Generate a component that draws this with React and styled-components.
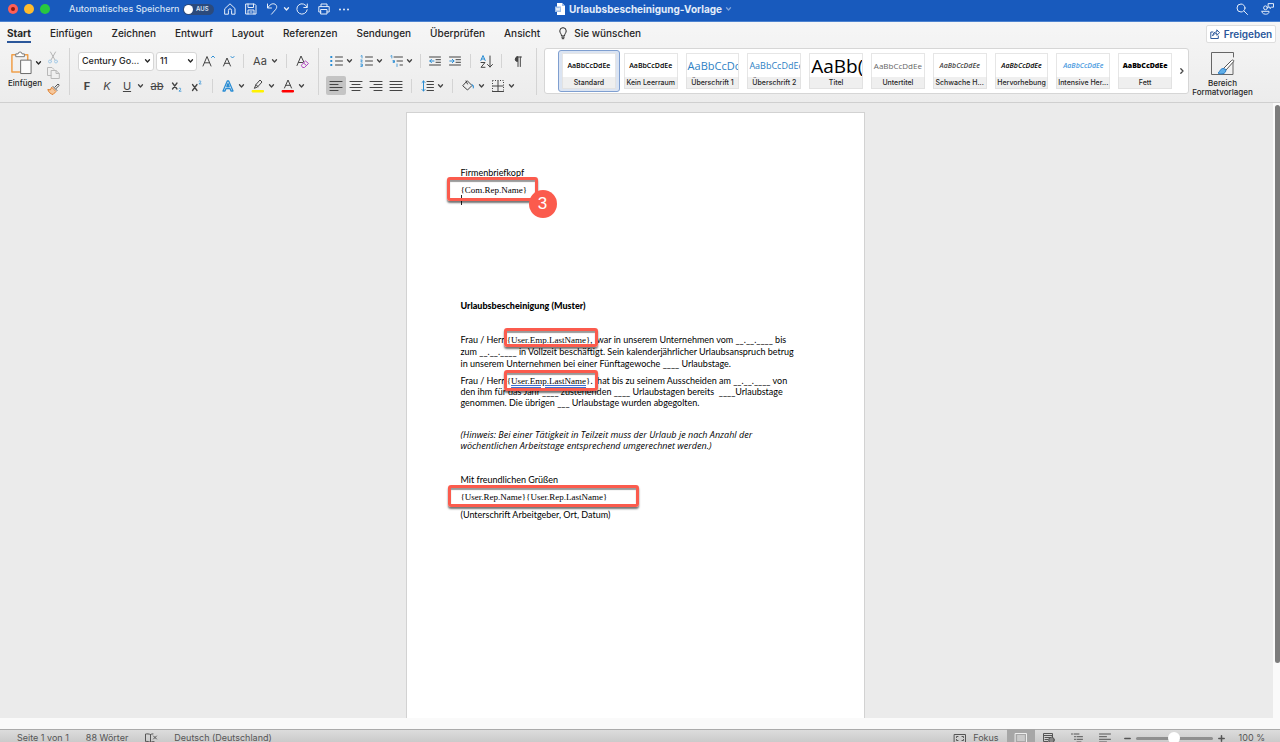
import React from "react";
import styled, { createGlobalStyle, css } from "styled-components";

const Global = createGlobalStyle`
  * { box-sizing: border-box; }
  body { margin: 0; font-family: Inter, "Liberation Sans", sans-serif; color: #262626; }
  button, select, input { font: inherit; color: inherit; margin: 0; padding: 0; border: 0; background: none; }
  a { color: inherit; text-decoration: none; }
  svg { display: block; flex: none; overflow: visible; }
`;

const Shell = styled.div`
  display: flex;
  flex-direction: column;
  height: 100vh;
  overflow: hidden;
`;

/* ---------- title bar ---------- */
const TitleBar = styled.header`
  display: grid;
  grid-template-columns: 1fr auto 1fr;
  align-items: center;
  flex: none;
  height: 22px;
  padding: 0 2px 3px 8px;
  background: #185abd;
  border-bottom: 1px solid #4d83d0;
  color: #fff;
`;
const TitleGroup = styled.div`
  display: flex;
  align-items: center;
  justify-content: ${(p) => (p.$end ? "flex-end" : "flex-start")};
  gap: ${(p) => p.$gap || 0}px;
`;
const Light = styled.button`
  display: grid;
  place-items: center;
  width: 10px;
  height: 10px;
  border-radius: 50%;
  background: ${(p) => p.$color};
  &::after {
    content: "";
    width: 4px;
    height: 4px;
    border-radius: 50%;
    background: ${(p) => (p.$dot ? "#8c1a10" : "transparent")};
  }
`;
const AutoSave = styled.label`
  display: flex;
  align-items: center;
  justify-content: space-between;
  width: 145px;
  margin: 0 5px 0 19px;
  font-size: 9px;
  font-weight: 500;
  line-height: 12px;
  color: #d5e2f5;
  white-space: nowrap;
`;
const SwitchTrack = styled.span`
  display: flex;
  align-items: center;
  gap: 3px;
  width: 31px;
  height: 11px;
  border-radius: 6px;
  background: #2b4a7c;
  font-size: 6px;
  font-weight: 600;
  line-height: 8px;
`;
const SwitchInput = styled.input`
  appearance: none;
  width: 9px;
  height: 9px;
  margin-left: 1px;
  border-radius: 50%;
  background: #fff;
`;
const BarButton = styled.button`
  display: grid;
  place-items: center;
  width: ${(p) => p.$w || 21}px;
  height: 16px;
  color: #e4edf9;
`;
const DocTitle = styled.h1`
  display: flex;
  align-items: center;
  gap: 4px;
  margin: 0;
  font-size: 10px;
  font-weight: 700;
  line-height: 14px;
  color: #e4edf9;
`;
const Dim = styled.span`
  opacity: 0.5;
`;

/* ---------- ribbon ---------- */
const Ribbon = styled.div`
  flex: none;
  height: 81px;
  background: linear-gradient(#f6f6f6, #ececec);
  border-bottom: 1px solid #cfcfcf;
`;
const TabBar = styled.nav`
  display: flex;
  align-items: flex-start;
  gap: 19px;
  height: 24px;
  padding: 3px 4px 0 7px;
`;
const Tab = styled.a`
  display: flex;
  align-items: center;
  gap: 7px;
  height: 18px;
  font-size: 10px;
  line-height: 14px;
  font-weight: ${(p) => (p.$active ? 700 : 500)};
  border-bottom: 2px solid ${(p) => (p.$active ? "#2b579a" : "transparent")};
  white-space: nowrap;
`;
const Share = styled.button`
  display: flex;
  align-items: center;
  justify-content: center;
  gap: 4px;
  width: 70px;
  height: 18px;
  margin-left: auto;
  border: 1px solid #dedede;
  border-radius: 2px;
  background: #fff;
  color: #2b579a;
  font-size: 10px;
  line-height: 14px;
  font-weight: 600;
`;
const Tools = styled.div`
  display: flex;
  align-items: flex-start;
  padding: 2px 0 0 6px;
`;
const PasteGroup = styled.div`
  display: grid;
  grid-template-columns: 38px 18px;
  align-items: start;
  width: 64px;
  height: 47px;
  border-right: 1px solid #d4d4d4;
`;
const Paste = styled.button`
  display: grid;
  justify-items: center;
  gap: 3px;
  padding-top: 3px;
  font-size: 8px;
  line-height: 10px;
  font-weight: 500;
`;
const PasteIcon = styled.span`
  display: flex;
  align-items: center;
  gap: 3px;
  height: 24px;
`;
const Stack = styled.div`
  display: grid;
  padding-top: 1px;
`;
const ToolGroup = styled.div`
  display: grid;
  grid-template-rows: 24px 25px;
  height: 47px;
  padding: 1px 0 0 7px;
  width: ${(p) => p.$w}px;
  border-right: 1px solid #d4d4d4;
`;
const ToolRow = styled.div`
  display: flex;
  align-items: center;
`;
const Tool = styled.button`
  display: grid;
  place-items: center;
  flex: none;
  width: ${(p) => p.$w || 20}px;
  height: ${(p) => p.$h || 19}px;
  border-radius: 2px;
  font-size: 11px;
  line-height: 14px;
  color: #444;
  ${(p) => p.$on && css`background: #c4c4c4;`}
`;
const Drop = styled.button`
  display: grid;
  align-items: center;
  padding-left: 1px;
  width: 10px;
  height: 18px;
  color: #444;
`;
const Rule = styled.span`
  flex: none;
  width: 1px;
  height: 14px;
  margin: 0 ${(p) => p.$m || 5}px;
  background: #d4d4d4;
`;
const Field = styled.label`
  display: grid;
  grid-template-columns: 1fr 8px;
  align-items: center;
  flex: none;
  width: ${(p) => p.$w}px;
  height: 19px;
  margin: 0 1px;
  border: 1px solid #d6d6d6;
  border-radius: 3px;
  background: #fff;
  color: #262626;
`;
const FieldSelect = styled.select`
  appearance: none;
  min-width: 0;
  padding-left: 3px;
  font-size: 9px;
  line-height: 14px;
  font-weight: 500;
`;

/* ---------- style gallery ---------- */
const Gallery = styled.div`
  display: grid;
  grid-template-columns: 1fr 12px;
  align-items: center;
  flex: 1;
  height: 46px;
  margin-left: 7px;
  padding-left: 13px;
  border: 1px solid #d6d6d6;
  border-radius: 3px;
  background: #fff;
`;
const Cards = styled.div`
  display: grid;
  grid-template-columns: repeat(10, 1fr);
  height: 42px;
`;
const Card = styled.button`
  display: grid;
  grid-template-rows: 1fr 12px;
  min-width: 0;
  padding: 2px 3px;
  border: 1px solid ${(p) => (p.$on ? "#7f9fd0" : "transparent")};
  border-radius: 3px;
  background: ${(p) => (p.$on ? "#dbe4f2" : "transparent")};
`;
const Sample = styled.span`
  display: grid;
  align-items: center;
  justify-content: ${(p) => (p.$size > 8 ? "start" : "center")};
  padding: 0 1px;
  overflow: hidden;
  white-space: nowrap;
  border: 1px solid #e6e6e6;
  border-bottom: 0;
  background: #fff;
  font-family: "Open Sans", "Noto Sans", sans-serif;
  font-size: ${(p) => p.$size}px;
  line-height: 22px;
  color: ${(p) => p.$color || "#000"};
  font-style: ${(p) => (p.$italic ? "italic" : "normal")};
  font-weight: ${(p) => p.$weight || 400};
`;
const CardName = styled.span`
  border: 1px solid #e2e2e2;
  border-top: 0;
  background: #efefef;
  font-size: 7px;
  line-height: 12px;
  font-weight: 500;
  text-align: center;
  white-space: nowrap;
`;
const PaneButton = styled.button`
  display: grid;
  justify-items: center;
  width: 67px;
  margin-right: 24px;
  padding-top: 3px;
  font-size: 8px;
  line-height: 9px;
  font-weight: 500;
`;
const PaneLabel = styled.span`
  padding-top: 3px;
`;

/* ---------- document ---------- */
const Workspace = styled.main`
  display: grid;
  grid-template-columns: 1fr 7px;
  flex: 1;
  min-height: 0;
  background: #fafafa;
`;
const Desk = styled.div`
  display: flex;
  justify-content: center;
  padding: 9px 3px 0 0;
  overflow: hidden;
  background: #ebebeb;
`;
const Track = styled.div`
  display: flex;
  flex-direction: column;
  padding: 2px 0 0 2px;
`;
const Thumb = styled.div`
  height: 91%;
  border-radius: 3px;
  background: #7c7c7c;
`;
const Paper = styled.article`
  position: relative;
  width: 459px;
  height: 650px;
  padding: 54px 54px;
  border: 1px solid #d2d2d2;
  background: #fff;
  color: #000;
  font-family: Lato, sans-serif;
  font-size: 9px;
  line-height: 11px;
`;
const Para = styled.p`
  margin: 0 0 ${(p) => p.$after || 0}px;
  line-height: ${(p) => p.$lead || 11}px;
  white-space: pre;
`;
const Note = styled(Para)`
  font-family: "Open Sans", sans-serif;
  font-style: italic;
`;
const Heading = styled.h2`
  margin: 0 0 23px;
  font-size: 9px;
  line-height: 11px;
  font-weight: 900;
`;
const Merge = styled.span`
  font-family: "Liberation Serif", serif;
  font-size: 9px;
  line-height: 0;
`;
const Checked = styled.span`
  text-decoration: underline double #3c6fd1 1px;
`;
const Caret = styled.span`
  display: block;
  width: 1px;
  height: 10px;
  margin-bottom: 95px;
  background: #222;
`;
const Frame = styled.span`
  position: absolute;
  left: ${(p) => p.$x}px;
  top: ${(p) => p.$y}px;
  width: ${(p) => p.$w}px;
  height: ${(p) => p.$h}px;
  border: 3px solid #fb5b4d;
  border-radius: 3px;
  box-shadow: 0 2px 2px rgba(0, 0, 0, 0.55), inset 0 2px 1px rgba(0, 0, 0, 0.4);
`;
const Marker = styled.span`
  position: absolute;
  left: 122px;
  top: 77px;
  width: 28px;
  height: 28px;
  border-radius: 50%;
  background: #fb5b4d;
  color: #fff;
  font-family: "Liberation Sans", sans-serif;
  font-size: 17px;
  line-height: 28px;
  text-align: center;
`;

/* ---------- status bar ---------- */
const Status = styled.footer`
  flex: none;
  height: 24px;
  padding-top: 11px;
  overflow: hidden;
  background: #fafafa;
`;
const StatusRow = styled.div`
  display: flex;
  align-items: center;
  height: 17px;
  padding: 0 15px 0 17px;
  border-top: 1px solid #ababab;
  background: linear-gradient(#dcdcdc, #c4c4c4);
  color: #555;
  font-size: 9px;
  line-height: 12px;
`;
const StatusItem = styled.button`
  display: flex;
  align-items: center;
  gap: 7px;
  margin-right: ${(p) => (p.$tight ? 8 : 17)}px;
  white-space: nowrap;
`;
const ViewButton = styled.button`
  display: grid;
  place-items: center;
  width: 28px;
  height: 18px;
  background: ${(p) => (p.$on ? "#a6a6a6" : "transparent")};
`;
const Spacer = styled.span`
  flex: 1;
`;
const Zoom = styled.label`
  display: flex;
  align-items: center;
  gap: 5px;
  margin: 0 14px 0 5px;
`;
const Slider = styled.input`
  appearance: none;
  width: 77px;
  height: 3px;
  border-radius: 2px;
  background: #8f8f8f;
  &::-webkit-slider-thumb {
    appearance: none;
    width: 12px;
    height: 12px;
    border-radius: 50%;
    background: #fff;
  }
`;

/* ---------- drawings ---------- */
const Svg = ({ w = 14, h = w, box, sw = 1, children }) => (
  <svg width={w} height={h} viewBox={box || `0 0 ${w} ${h}`} fill="none" stroke="currentColor" strokeWidth={sw} strokeLinecap="round" strokeLinejoin="round" aria-hidden="true">
    {children}
  </svg>
);
const Chevron = () => <Svg w={5} h={4} sw={1.3}><path d="M.5 .8 2.5 3 4.5 .8" /></Svg>;
const Lines = ({ rows, x = 0 }) => rows.map(([a, b], i) => <path key={i} d={`M${a + x} ${1.5 + i * 3}H${b + x}`} />);
const Align = ({ rows }) => <Svg w={12} h={12} sw={1.1}><Lines rows={rows} /></Svg>;
const BLUE = "#2a8dd4";

const tabs = ["Start", "Einfügen", "Zeichnen", "Entwurf", "Layout", "Referenzen", "Sendungen", "Überprüfen", "Ansicht"];
const cards = [
  { name: "Standard", size: 7, weight: 600 },
  { name: "Kein Leerraum", size: 7, weight: 600 },
  { name: "Überschrift 1", size: 11, color: "#2e7fc4", text: "AaBbCcDc" },
  { name: "Überschrift 2", size: 9, color: "#2e7fc4" },
  { name: "Titel", size: 19, text: "AaBb(" },
  { name: "Untertitel", size: 8, color: "#666" },
  { name: "Schwache H...", size: 7, color: "#444", italic: true, weight: 600 },
  { name: "Hervorhebung", size: 7, italic: true, weight: 600 },
  { name: "Intensive Her...", size: 7, color: "#4a9be0", italic: true, weight: 600 },
  { name: "Fett", size: 7, weight: 800 },
];

const TitleSection = () => (
  <TitleBar>
    <TitleGroup>
      <TitleGroup $gap={6}>
        <Light $color="#fe5f57" $dot aria-label="Schließen" />
        <Light $color="#febc2e" aria-label="Minimieren" />
        <Light $color="#28c840" aria-label="Vollbild" />
      </TitleGroup>
      <AutoSave>
        Automatisches Speichern
        <SwitchTrack><SwitchInput type="checkbox" role="switch" />AUS</SwitchTrack>
      </AutoSave>
      <BarButton aria-label="Start"><Svg w={12}><path d="M1 5.500 6 .8l5 4.700v5.700H7.600V7.400a1.600 1.600 0 0 0-3.200 0v3.800H1z" /></Svg></BarButton>
      <BarButton aria-label="Speichern"><Svg w={12}><path d="M1 1h8.500L11 2.500V11H1zM3 1v3.500h5.500V1M3 11V7h6v4M5 9h2" /></Svg></BarButton>
      <BarButton aria-label="Rückgängig"><Svg w={12}><path d="M1.500 1v4h4M1.800 4.800C3.500 2 6-.2 9 1.200c2.500 1.500 2 4 .2 5.800L5.500 11.200" /></Svg></BarButton>
      <BarButton $w={8} aria-label="Mehr"><Chevron /></BarButton>
      <BarButton $w={24} aria-label="Wiederholen"><Svg w={12}><path d="M11.300 1v3.500H7.800M11 4.300A5.200 5.200 0 1 0 11.200 6.800" /></Svg></BarButton>
      <BarButton $w={19} aria-label="Drucken"><Svg w={12}><path d="M3 3.500V1h6v2.500M3 9H.8V3.600h10.400V9H9M3 6.500h6V11H3z" /></Svg></BarButton>
      <BarButton $w={22} aria-label="Weitere"><Svg w={12} h={3} sw={0}><g fill="currentColor"><circle cx="2" cy="1.500" r="1" /><circle cx="6" cy="1.500" r="1" /><circle cx="10" cy="1.500" r="1" /></g></Svg></BarButton>
    </TitleGroup>
    <DocTitle>
      <Svg w={10} h={12} sw={0}><path fill="#fff" d="M2 0h5l3 3v9H2z" /><path fill="#9dbde8" d="M7 0v3h3zM0 3.500h6v5.500H0z" /><path stroke="#fff" strokeWidth=".8" d="M1.200 5 2 7.500l1-2.500 1 2.500L4.800 5" /></Svg>
      Urlaubsbescheinigung-Vorlage
      <Dim><Chevron /></Dim>
    </DocTitle>
    <TitleGroup $end $gap={5}>
      <BarButton aria-label="Suchen"><Svg w={12}><circle cx="5" cy="5" r="4" /><path d="m8 8 3.500 3.500" /></Svg></BarButton>
      <BarButton aria-label="Personen"><Svg w={13} h={12}><circle cx="4.500" cy="4.800" r="1.900" /><path d="M1 8.300h7v.7c0 3-7 3-7 0zM7.500.6h5v3.600h-2L9 5.600V4.200H7.500z" /></Svg></BarButton>
    </TitleGroup>
  </TitleBar>
);

const PasteTools = () => (
  <PasteGroup>
    <Paste>
      <PasteIcon>
        <Svg w={23} h={24} box="0 0 24 25">
          <path stroke="#f0a04b" strokeWidth="1.600" d="M7 3.800H2V22h8M15 3.800h3.500V9" />
          <path stroke="#777" fill="#fff" d="M6 5.500V3h2.500a2 2 0 0 1 4 0H15v2.500z" />
          <path stroke="#666" fill="#fbfbfb" d="M11.500 9.500h10.500v14H11.500z" />
        </Svg>
        <Chevron />
      </PasteIcon>
      Einfügen
    </Paste>
    <Stack>
      <Tool $w={18} $h={16} aria-label="Ausschneiden"><Svg w={12} h={13}><g stroke="#b5b5b5"><path d="M3.500 1 8 9M8.500 1 4 9" /></g><g stroke="#a5cbe8"><circle cx="3" cy="10.500" r="1.500" /><circle cx="9" cy="10.500" r="1.500" /></g></Svg></Tool>
      <Tool $w={18} $h={16} aria-label="Kopieren"><Svg w={13} h={12}><g stroke="#b8b8b8"><path d="M4 8.500H.5V.5H5l2 2M4.500 3.500H9L12.300 6.500v5H4.500zM9 3.500v3h3" /></g></Svg></Tool>
      <Tool $w={18} $h={16} aria-label="Format übertragen"><Svg w={13} h={12}><path stroke="#555" d="m8 4 3-3 1.300 1.300-3 3M6 3.500l4 4" /><path stroke="#e07f2c" fill="#f6c79b" d="M5 4.500 9 8.500 6 11.500C3.500 11 1.500 9 .8 6.500L3 6.800z" /></Svg></Tool>
    </Stack>
  </PasteGroup>
);

const FontTools = () => (
  <ToolGroup $w={249}>
    <ToolRow>
      <Field $w={76}><FieldSelect aria-label="Schriftart"><option>Century Go...</option></FieldSelect><Chevron /></Field>
      <Field $w={41}><FieldSelect aria-label="Schriftgrad"><option>11</option></FieldSelect><Chevron /></Field>
      <Tool aria-label="Schrift vergrößern"><Svg w={13} h={12}><path d="M1 11 5 1.500 9 11M2.500 7.800h5" /><path stroke={BLUE} d="m9.500 2.500 1.500-1.500L12.500 2.500" /></Svg></Tool>
      <Tool aria-label="Schrift verkleinern"><Svg w={13} h={12}><path d="M1.500 11 5 3l3.500 8M2.800 8.300h4.400" /><path stroke={BLUE} d="M9 1.500 10.500 3 12 1.500" /></Svg></Tool>
      <Rule />
      <Tool $w={22}>Aa</Tool><Drop aria-label="Groß-/Kleinschreibung"><Chevron /></Drop>
      <Rule />
      <Tool aria-label="Formatierung löschen"><Svg w={13} h={13}><path d="M1 10.500 5 1l2.800 6M2.500 7.500h4" /><path stroke="#b146c2" d="m5.500 10 4-4 3 2.500-4 4h-1.500zM7.500 8l3 2.500" /></Svg></Tool>
    </ToolRow>
    <ToolRow>
      <Tool><b>F</b></Tool><Tool><i>K</i></Tool><Tool><u>U</u></Tool><Drop aria-label="Unterstreichung"><Chevron /></Drop>
      <Tool><s>ab</s></Tool>
      <Tool aria-label="Tiefgestellt"><Svg w={12} h={12}><path strokeWidth="1.300" d="m1.500 3 4.500 6M6 3 1.500 9" /><path stroke={BLUE} strokeWidth=".8" d="M8 8.500c1-1 2.300 0 1.500 1L8 11.200h2" /></Svg></Tool>
      <Tool aria-label="Hochgestellt"><Svg w={12} h={12}><path strokeWidth="1.300" d="m1.500 4.500 4.500 6M6 4.500l-4.500 6" /><path stroke={BLUE} strokeWidth=".8" d="M8 1.200c1-1 2.300 0 1.500 1L8 3.900h2" /></Svg></Tool>
      <Rule />
      <Tool aria-label="Texteffekte"><Svg w={13} h={12}><path stroke={BLUE} strokeWidth="1.300" d="M1 11 5.300 1h1.400L11 11H9L8 8.500H4L3 11zM4.800 6.500h2.400L6 3.500z" /></Svg></Tool><Drop aria-label="Effekte"><Chevron /></Drop>
      <Tool aria-label="Texthervorhebung"><Svg w={14} h={14}><path fill="#fff200" stroke="#fff200" d="M1.500 11.500h11v1.500h-11z" /><path d="M3.500 9 5 5.500 9 1l2 2-4 4.500zM5 5.800 7 7.500" /></Svg></Tool><Drop aria-label="Hervorhebungsfarbe"><Chevron /></Drop>
      <Tool aria-label="Schriftfarbe"><Svg w={14} h={14}><path d="M3.500 9 7 1l3.500 8M4.700 6.300h4.600" /><path fill="#f00" stroke="#f00" d="M1.500 11.500h11v1.500h-11z" /></Svg></Tool><Drop aria-label="Farbe wählen"><Chevron /></Drop>
    </ToolRow>
  </ToolGroup>
);

const ParagraphTools = () => (
  <ToolGroup $w={218}>
    <ToolRow>
      <Tool aria-label="Aufzählung"><Svg w={13} h={12}><path d="M5.500 2h7M5.500 6h7M5.500 10h7" /><path fill={BLUE} stroke={BLUE} d="M1 1.500h1v1H1zM1 5.500h1v1H1zM1 9.500h1v1H1z" /></Svg></Tool><Drop aria-label="Aufzählungszeichen"><Chevron /></Drop>
      <Tool aria-label="Nummerierung"><Svg w={13} h={12}><path d="M5.500 2h7M5.500 6h7M5.500 10h7" /><path stroke={BLUE} strokeWidth=".8" d="m1 1 1-.5V3M.8 5h1.500L.8 7h1.500M.8 9h1.500v2.500H.8M1 10.200h1.300" /></Svg></Tool><Drop aria-label="Nummerierungsformat"><Chevron /></Drop>
      <Tool aria-label="Liste mit mehreren Ebenen"><Svg w={13} h={12}><path d="M4 2h8.500M7 6h5.500M10 10h2.500" /><path stroke={BLUE} strokeWidth=".8" d="m.8 1 1-.5V3M3 5.500h1.500v2H3v-1h1.500M7 9v2.500" /></Svg></Tool><Drop aria-label="Listenebene"><Chevron /></Drop>
      <Rule $m={4} />
      <Tool aria-label="Einzug verkleinern"><Svg w={12} h={10}><path d="M.5 1h11M7 3.700h4.500M7 6.300h4.500M.5 9h11" /><path stroke={BLUE} d="M.8 5H5M2.500 3.300.8 5l1.700 1.700" /></Svg></Tool>
      <Tool aria-label="Einzug vergrößern"><Svg w={12} h={10}><path d="M.5 1h11M7 3.700h4.500M7 6.300h4.500M.5 9h11" /><path stroke={BLUE} d="M.8 5H5M3.300 3.300 5 5 3.300 6.700" /></Svg></Tool>
      <Rule />
      <Tool aria-label="Sortieren"><Svg w={13} h={13}><path stroke={BLUE} d="M.8 5.500 3 .5l2.200 5M1.500 4h3" /><path d="M1 7.500h4L1 12.300h4M10 1v11M7.500 9.500 10 12l2.500-2.500" /></Svg></Tool>
      <Rule />
      <Tool aria-label="Absatzmarken"><Svg w={9} h={11}><path fill="currentColor" d="M4.500 1v4.500A2.200 2.200 0 0 1 4.500 1z" /><path d="M3.500 1h5M5 1v9.500M7.300 1v9.500" /></Svg></Tool>
    </ToolRow>
    <ToolRow>
      <Tool $on aria-label="Linksbündig"><Align rows={[[0, 12], [0, 8], [0, 12], [0, 8]]} /></Tool>
      <Tool aria-label="Zentriert"><Align rows={[[0, 12], [2, 10], [0, 12], [2, 10]]} /></Tool>
      <Tool aria-label="Rechtsbündig"><Align rows={[[0, 12], [4, 12], [0, 12], [4, 12]]} /></Tool>
      <Tool aria-label="Blocksatz"><Align rows={[[0, 12], [0, 12], [0, 12], [0, 12]]} /></Tool>
      <Rule />
      <Tool aria-label="Zeilenabstand"><Svg w={13} h={12}><path d="M6 1.500h6.500M6 4.500h6.500M6 7.500h6.500M6 10.500h6.500" /><path stroke={BLUE} d="M2.500 1v10M1 2.500 2.500 1 4 2.500M1 9.500 2.500 11 4 9.500" /></Svg></Tool><Drop aria-label="Abstand wählen"><Chevron /></Drop>
      <Rule />
      <Tool aria-label="Schattierung"><Svg w={13} h={12}><path d="m5.500 1 4.500 4.500-4.500 4.500L1 6zM4 1l1.500 3" /><path fill={BLUE} stroke={BLUE} d="M10 4.500c1.500.5 1.500 2 1.300 3.500" /></Svg></Tool><Drop aria-label="Schattierungsfarbe"><Chevron /></Drop>
      <Tool aria-label="Rahmen"><Svg w={12} h={12}><path strokeDasharray="1 1.500" strokeLinecap="butt" d="M.5.5h11v11M.5.5v11" /><path d="M.5 11.500h11M6 1v10M1 6h10" /></Svg></Tool><Drop aria-label="Rahmenart"><Chevron /></Drop>
    </ToolRow>
  </ToolGroup>
);

const StyleGallery = () => (
  <Gallery>
    <Cards>
      {cards.map((c, i) => (
        <Card key={c.name} $on={i === 0}>
          <Sample $size={c.size} $color={c.color} $italic={c.italic} $weight={c.weight}>{c.text || "AaBbCcDdEe"}</Sample>
          <CardName>{c.name}</CardName>
        </Card>
      ))}
    </Cards>
    <Tool $w={12} aria-label="Weitere Formatvorlagen"><Svg w={4} h={6} sw={1.3}><path d="M.8.8 3 3 .8 5.200" /></Svg></Tool>
  </Gallery>
);

const RibbonSection = () => (
  <Ribbon>
    <TabBar>
      {tabs.map((t, i) => <Tab key={t} href="#" $active={i === 0}>{t}</Tab>)}
      <Tab href="#">
        <Svg w={8} h={12}><path d="M2.500 8.500C2.500 6.800.8 6 .8 3.900a3.200 3.200 0 0 1 6.400 0C7.200 6 5.500 6.800 5.500 8.500zM2.800 10.200h2.400M3.200 11.700h1.600" /></Svg>
        Sie wünschen
      </Tab>
      <Share>
        <Svg w={10} h={10}><path d="M3 3H.8v6.500h7.500V7M2.800 6.500C3 4 4.500 3 6.800 3V.8L9.600 3.700 6.800 6.300V4.500C5 4.500 3.800 5 2.800 6.500z" /></Svg>
        Freigeben
      </Share>
    </TabBar>
    <Tools>
      <PasteTools />
      <FontTools />
      <ParagraphTools />
      <StyleGallery />
      <PaneButton>
        <Svg w={25} h={25}>
          <path stroke="#666" d="M23 11v12.500H1.500V1.500h22V6" />
          <path stroke="#555" fill="#fff" d="M13.500 17.500 21.500 9.500c1-1 3-.5 2 1.200L16 19z" />
          <path stroke="#2b7cc4" fill="#5faee8" d="M13.500 17.500c-3-.5-3 2.500-5.500 4.500 3 2 8 1 8-3z" />
        </Svg>
        <PaneLabel>Bereich<br />Formatvorlagen</PaneLabel>
      </PaneButton>
    </Tools>
  </Ribbon>
);

const DocumentPage = () => (
  <Paper>
    <Para $after={6}>Firmenbriefkopf</Para>
    <Para><Merge>{"{Com.Rep.Name}"}</Merge></Para>
    <Caret />
    <Heading>Urlaubsbescheinigung (Muster)</Heading>
    <Para $after={5} $lead={12}>
      Frau / Herr <Merge>{"{User.Emp.LastName}"}</Merge>{",  war in unserem Unternehmen vom __.__.____ bis\nzum __.__.____ in Vollzeit beschäftigt. Sein kalenderjährlicher Urlaubsanspruch betrug\nin unserem Unternehmen bei einer Fünftagewoche ____ Urlaubstage."}
    </Para>
    <Para $after={21}>
      Frau / Herr <Merge>{"{"}<Checked>User.Emp.LastName</Checked>{"}"}</Merge>{".  hat bis zu seinem Ausscheiden am __.__.____ von\nden ihm für das Jahr ____ zustehenden ____ Urlaubstagen bereits  ____Urlaubstage\ngenommen. Die übrigen ___ Urlaubstage wurden abgegolten."}
    </Para>
    <Note $after={23}>{"(Hinweis: Bei einer Tätigkeit in Teilzeit muss der Urlaub je nach Anzahl der\nwöchentlichen Arbeitstage entsprechend umgerechnet werden.)"}</Note>
    <Para $after={6}>Mit freundlichen Grüßen</Para>
    <Para $after={7}><Merge>{"{User.Rep.Name}{User.Rep.LastName}"}</Merge></Para>
    <Para>(Unterschrift Arbeitgeber, Ort, Datum)</Para>
    <Frame $x={40} $y={64} $w={91} $h={24} />
    <Frame $x={97} $y={215} $w={94} $h={19} />
    <Frame $x={97} $y={257} $w={94} $h={21} />
    <Frame $x={41} $y={372} $w={191} $h={22} />
    <Marker>3</Marker>
  </Paper>
);

const StatusSection = () => (
  <Status>
    <StatusRow>
      <StatusItem>Seite 1 von 1</StatusItem>
      <StatusItem>88 Wörter</StatusItem>
      <StatusItem aria-label="Rechtschreibung"><Svg w={12} h={10}><path d="M5.500 1.500C4 .8 2 .8.5 1v7.500c2-.3 3.500 0 5 1M5.500 1.500V9.500c1-.7 2-1 3.500-1M5.500 1.500C6.500 1 7 .9 8 .9M8.500 3l3 3M11.500 3l-3 3" /></Svg></StatusItem>
      <StatusItem>Deutsch (Deutschland)</StatusItem>
      <Spacer />
      <StatusItem $tight><Svg w={12} h={9}><path d="M.5.5h11v8H.5zM2.500 3.500v-1h1.500M8 2.500h1.500v1M9.500 5.500v1H8M4 6.500H2.500v-1" /></Svg>Fokus</StatusItem>
      <ViewButton $on aria-label="Drucklayout"><Svg w={12} h={10}><path stroke="#eee" d="M.5.5h11v9H.5zM2.500 3h7M2.500 5h7M2.500 7h7" /></Svg></ViewButton>
      <ViewButton aria-label="Weblayout"><Svg w={12} h={10}><path d="M9.500 4V.5h-9v8H5M.5 2.500h9M2 4.500h5M2 6.500h3" /><circle cx="8.500" cy="7" r="2.800" fill="#888" /></Svg></ViewButton>
      <ViewButton aria-label="Gliederung"><Svg w={12} h={10}><path d="M.5 1h1M3 1h5M3.500 3.700h1M6 3.700h5.500M3.500 6.300h1M6 6.300h5.500M6 9h4" /></Svg></ViewButton>
      <ViewButton aria-label="Entwurf"><Svg w={12} h={10}><path d="M.5 1h11M.5 3.700h7M.5 6.300h11M.5 9h7" /></Svg></ViewButton>
      <Zoom>
        <Svg w={7} h={7} sw={1.5}><path d="M.8 3.500h5.400" /></Svg>
        <Slider type="range" min="0" max="200" defaultValue="100" aria-label="Zoom" />
        <Svg w={7} h={7} sw={1.5}><path d="M.8 3.500h5.400M3.500.8v5.400" /></Svg>
      </Zoom>
      <span>100 %</span>
    </StatusRow>
  </Status>
);

export default function App() {
  return (
    <Shell>
      <Global />
      <TitleSection />
      <RibbonSection />
      <Workspace>
        <Desk><DocumentPage /></Desk>
        <Track><Thumb /></Track>
      </Workspace>
      <StatusSection />
    </Shell>
  );
}
